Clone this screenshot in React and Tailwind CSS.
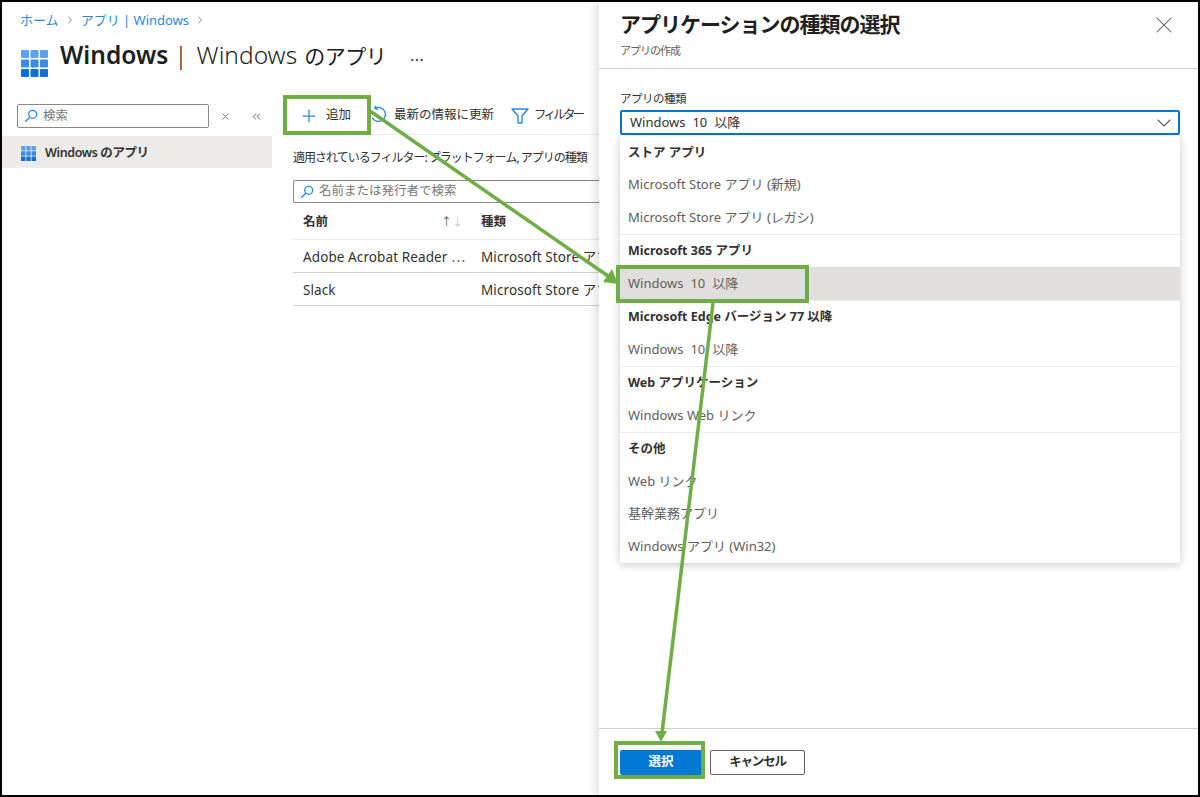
import React from 'react'
import { Plus, X, ChevronDown, ChevronsLeft, MoreHorizontal, ChevronRight } from 'lucide-react'

const font = { fontFamily: '"Noto Sans", "Noto Sans CJK JP", sans-serif' }

const AppGrid = ({ className }) => (
  <svg viewBox="0 0 27 27" className={className}>
    {[0, 9.5, 19].map((y, r) =>
      [0, 9.5, 19].map((x) => (
        <rect key={`${x}-${y}`} x={x} y={y} width="8" height="8" rx="1" fill={['#5ea0ef', '#3a8be6', '#0f6fd4'][r]} />
      ))
    )}
  </svg>
)

const SearchIcon = () => (
  <svg viewBox="0 0 14 14" className="w-[14px] h-[14px] shrink-0" fill="none" stroke="#2b88d8" strokeWidth="1.3">
    <circle cx="8.7" cy="5.3" r="4" />
    <line x1="5.8" y1="8.2" x2="1.2" y2="12.8" />
  </svg>
)

const RefreshIcon = () => (
  <svg viewBox="0 0 18 18" className="w-[18px] h-[18px] shrink-0" fill="none" stroke="#2b88d8" strokeWidth="1.4">
    <path d="M5 3.2a7 7 0 1 1-2.8 9.5" />
    <path d="M5.8 0.8 L5 3.6 L8 4.4" />
  </svg>
)

const FilterIcon = () => (
  <svg viewBox="0 0 18 16" className="w-[18px] h-[16px] shrink-0" fill="none" stroke="#2b88d8" strokeWidth="1.4" strokeLinejoin="round">
    <path d="M1 1h16l-6 7v7H7V8z" />
  </svg>
)

const Group = ({ label, items, last }) => (
  <div className={last ? '' : 'border-b border-[#edebe9]'}>
    <div className="h-[32.5px] flex items-center px-2 pt-[2px] text-[12.5px] font-bold text-[#323130]">{label}</div>
    {items.map((item) => (
      <div
        key={item.name}
        className={`h-[32.5px] flex items-center px-2 text-[13px] text-[#605e5c] ${item.spaced ? '[word-spacing:3.5px]' : ''} ${item.active ? 'bg-[#e1dfdd]' : ''}`}
      >
        {item.name}
      </div>
    ))}
  </div>
)

const groups = [
  { label: 'ストア アプリ', items: [{ name: 'Microsoft Store アプリ (新規)' }, { name: 'Microsoft Store アプリ (レガシ)' }] },
  { label: 'Microsoft 365 アプリ', items: [{ name: 'Windows 10 以降', active: true, spaced: true }] },
  { label: 'Microsoft Edge バージョン 77 以降', items: [{ name: 'Windows 10 以降', spaced: true }] },
  { label: 'Web アプリケーション', items: [{ name: 'Windows Web リンク' }] },
  { label: 'その他', items: [{ name: 'Web リンク' }, { name: '基幹業務アプリ' }, { name: 'Windows アプリ (Win32)' }], last: true },
]

const Annotations = () => (
  <svg className="absolute left-0 top-0 pointer-events-none" width="1200" height="797" viewBox="0 0 1200 797">
    <g fill="none" stroke="#70ad47" strokeWidth="4">
      <rect x="285" y="97" width="84" height="36" />
      <rect x="618" y="267" width="189" height="34" />
      <rect x="616" y="743" width="87" height="34" />
    </g>
    <g fill="none" stroke="#70ad47" strokeWidth="3.5">
      <line x1="370" y1="111" x2="608" y2="276" />
      <line x1="713" y1="303" x2="662" y2="733" />
    </g>
    <polygon points="618,284 603,282 612,269" fill="#70ad47" />
    <polygon points="661,742 655,731 667,731" fill="#70ad47" />
  </svg>
)

export default function App() {
  return (
    <div style={font} className="relative w-[1200px] h-[797px] overflow-hidden bg-white border-2 border-black flex">
      <div className="w-[597px] shrink-0 flex flex-col">
        <div className="h-[95px] shrink-0 pl-[18px] pt-[8px]">
          <div className="flex items-center gap-[5px] text-[13px] leading-[20px] text-[#2b88d8] whitespace-nowrap">
            <span>ホーム</span>
            <ChevronRight className="w-3 h-3 text-[#8a8886]" />
            <span>アプリ | Windows</span>
            <ChevronRight className="w-3 h-3 text-[#8a8886]" />
          </div>
          <div className="flex items-start mt-[8px]">
            <AppGrid className="w-[27px] h-[27px] mt-[12px] ml-[1px]" />
            <div className="ml-[12px] text-[24.5px] leading-[34px] text-[#201f1e] whitespace-nowrap">
              <span className="font-semibold">Windows</span>
              <span className="ml-[6px] font-light">|</span>
              <span className="ml-[9px] font-light">Windows</span>
              <span className="ml-[7px] text-[21px] tracking-[-0.5px]">のアプリ</span>
            </div>
            <MoreHorizontal className="w-4 h-4 ml-[23px] mt-[14px] text-[#605e5c]" />
          </div>
        </div>

        <div className="flex flex-1">
          <div className="w-[270px] shrink-0">
            <div className="flex items-center mt-[7px] pl-[15px]">
              <div className="w-[192px] h-[24px] border border-[#8a8886] rounded-[2px] flex items-center px-[6px] gap-[5px]">
                <SearchIcon />
                <span className="text-[12.5px] text-[#797775]">検索</span>
              </div>
              <X className="w-[11px] h-[11px] ml-[11px] text-[#797775]" />
              <ChevronsLeft className="w-[13px] h-[13px] ml-[19px] text-[#a19f9d]" />
            </div>
            <div className="mt-[8px] h-[32px] bg-[#edebe9] flex items-center pl-[19px] gap-[9px] text-[12.5px] font-semibold tracking-[-0.4px] text-[#323130] pt-[2px]">
              <AppGrid className="w-[15px] h-[15px]" />
              Windows のアプリ
            </div>
          </div>

          <div className="flex-1 pl-[21px] min-w-0">
            <div className="h-[38px] flex items-center border-b border-[#edebe9] text-[12.5px] text-[#323130] whitespace-nowrap">
              <Plus className="w-[20px] h-[20px] ml-[6px] text-[#2b88d8]" strokeWidth={1.5} />
              <span className="ml-[7px]">追加</span>
              <div className="ml-[19px] -mt-[3px]"><RefreshIcon /></div>
              <span className="ml-[6px]">最新の情報に更新</span>
              <div className="ml-[17px]"><FilterIcon /></div>
              <span className="ml-[5px] tracking-[-2.8px]">フィルター</span>
            </div>
            <div className="mt-[13px] text-[12px] leading-[20px] tracking-[-1px] text-[#323130] whitespace-nowrap">
              適用されているフィルター: プラットフォーム, アプリの種類
            </div>
            <div className="mt-[12px] h-[23px] border border-[#8a8886] border-r-0 rounded-l-[2px] flex items-center px-[6px] gap-[5px]">
              <SearchIcon />
              <span className="text-[12.5px] text-[#797775]">名前または発行者で検索</span>
            </div>
            <div className="h-[37px] flex items-center border-b border-[#edebe9] text-[12.5px] font-bold text-[#323130] pt-[2px]">
              <div className="w-[188px] pl-[10px] flex items-center justify-between pr-[18px]">
                <span>名前</span>
                <span className="font-normal text-[11px] text-[#605e5c]">↑<span className="text-[#c8c6c4]">↓</span></span>
              </div>
              <span>種類</span>
            </div>
            {['Adobe Acrobat Reader ⋯', 'Slack'].map((name) => (
              <div key={name} className="h-[33px] flex items-center border-b border-[#d2d0ce] text-[13.5px] tracking-[0.1px] text-[#323130] whitespace-nowrap overflow-hidden pt-[2px]">
                <div className="w-[188px] shrink-0 pl-[10px]">{name}</div>
                <span>Microsoft Store アプリ</span>
              </div>
            ))}
          </div>
        </div>
      </div>

      <div className="w-[599px] shrink-0 bg-white flex flex-col shadow-[-4px_0_8px_rgba(0,0,0,0.12)] z-10">
        <div className="h-[67px] shrink-0 border-b border-[#d2d0ce] pl-[21px] pr-[20px] flex justify-between">
          <div>
            <div className="text-[21px] leading-[30px] mt-[7px] font-semibold tracking-[-1px] text-[#201f1e]">アプリケーションの種類の選択</div>
            <div className="text-[11px] leading-[16px] mt-[4px] tracking-[-1px] text-[#605e5c]">アプリの作成</div>
          </div>
          <X className="w-[28px] h-[28px] mt-[9px] text-[#605e5c]" strokeWidth={0.9} />
        </div>

        <div className="flex-1 pl-[21px] pr-[18px] min-h-0">
          <div className="mt-[21px] text-[11.5px] leading-[18px] tracking-[-0.5px] text-[#323130]">アプリの種類</div>
          <div className="mt-[2px] h-[25px] border-2 border-[#0078d4] rounded-[2px] flex items-center justify-between pl-2 pr-[2px] text-[13px] [word-spacing:3.5px] text-[#323130]">
            <span>Windows 10 以降</span>
            <ChevronDown className="w-[24px] h-[24px] text-[#605e5c]" strokeWidth={1.1} />
          </div>
          <div className="mt-[1px] shadow-[0_2px_8px_rgba(0,0,0,0.22)] bg-white rounded-[2px]">
            {groups.map((g) => (
              <Group key={g.label} {...g} />
            ))}
          </div>
        </div>

        <div className="h-[67px] shrink-0 border-t border-[#d2d0ce] pl-[21px] pt-[21px] flex items-start gap-[8px]">
          <button className="w-[82px] h-[25px] bg-[#0078d4] rounded-[2px] text-[12.5px] font-bold text-white">選択</button>
          <button className="w-[95px] h-[25px] bg-white border border-[#605e5c] rounded-[2px] text-[12.5px] font-bold tracking-[-1.2px] text-[#323130]">キャンセル</button>
        </div>
      </div>

      <div className="absolute left-[-2px] top-[-2px] z-20">
        <Annotations />
      </div>
    </div>
  )
}
